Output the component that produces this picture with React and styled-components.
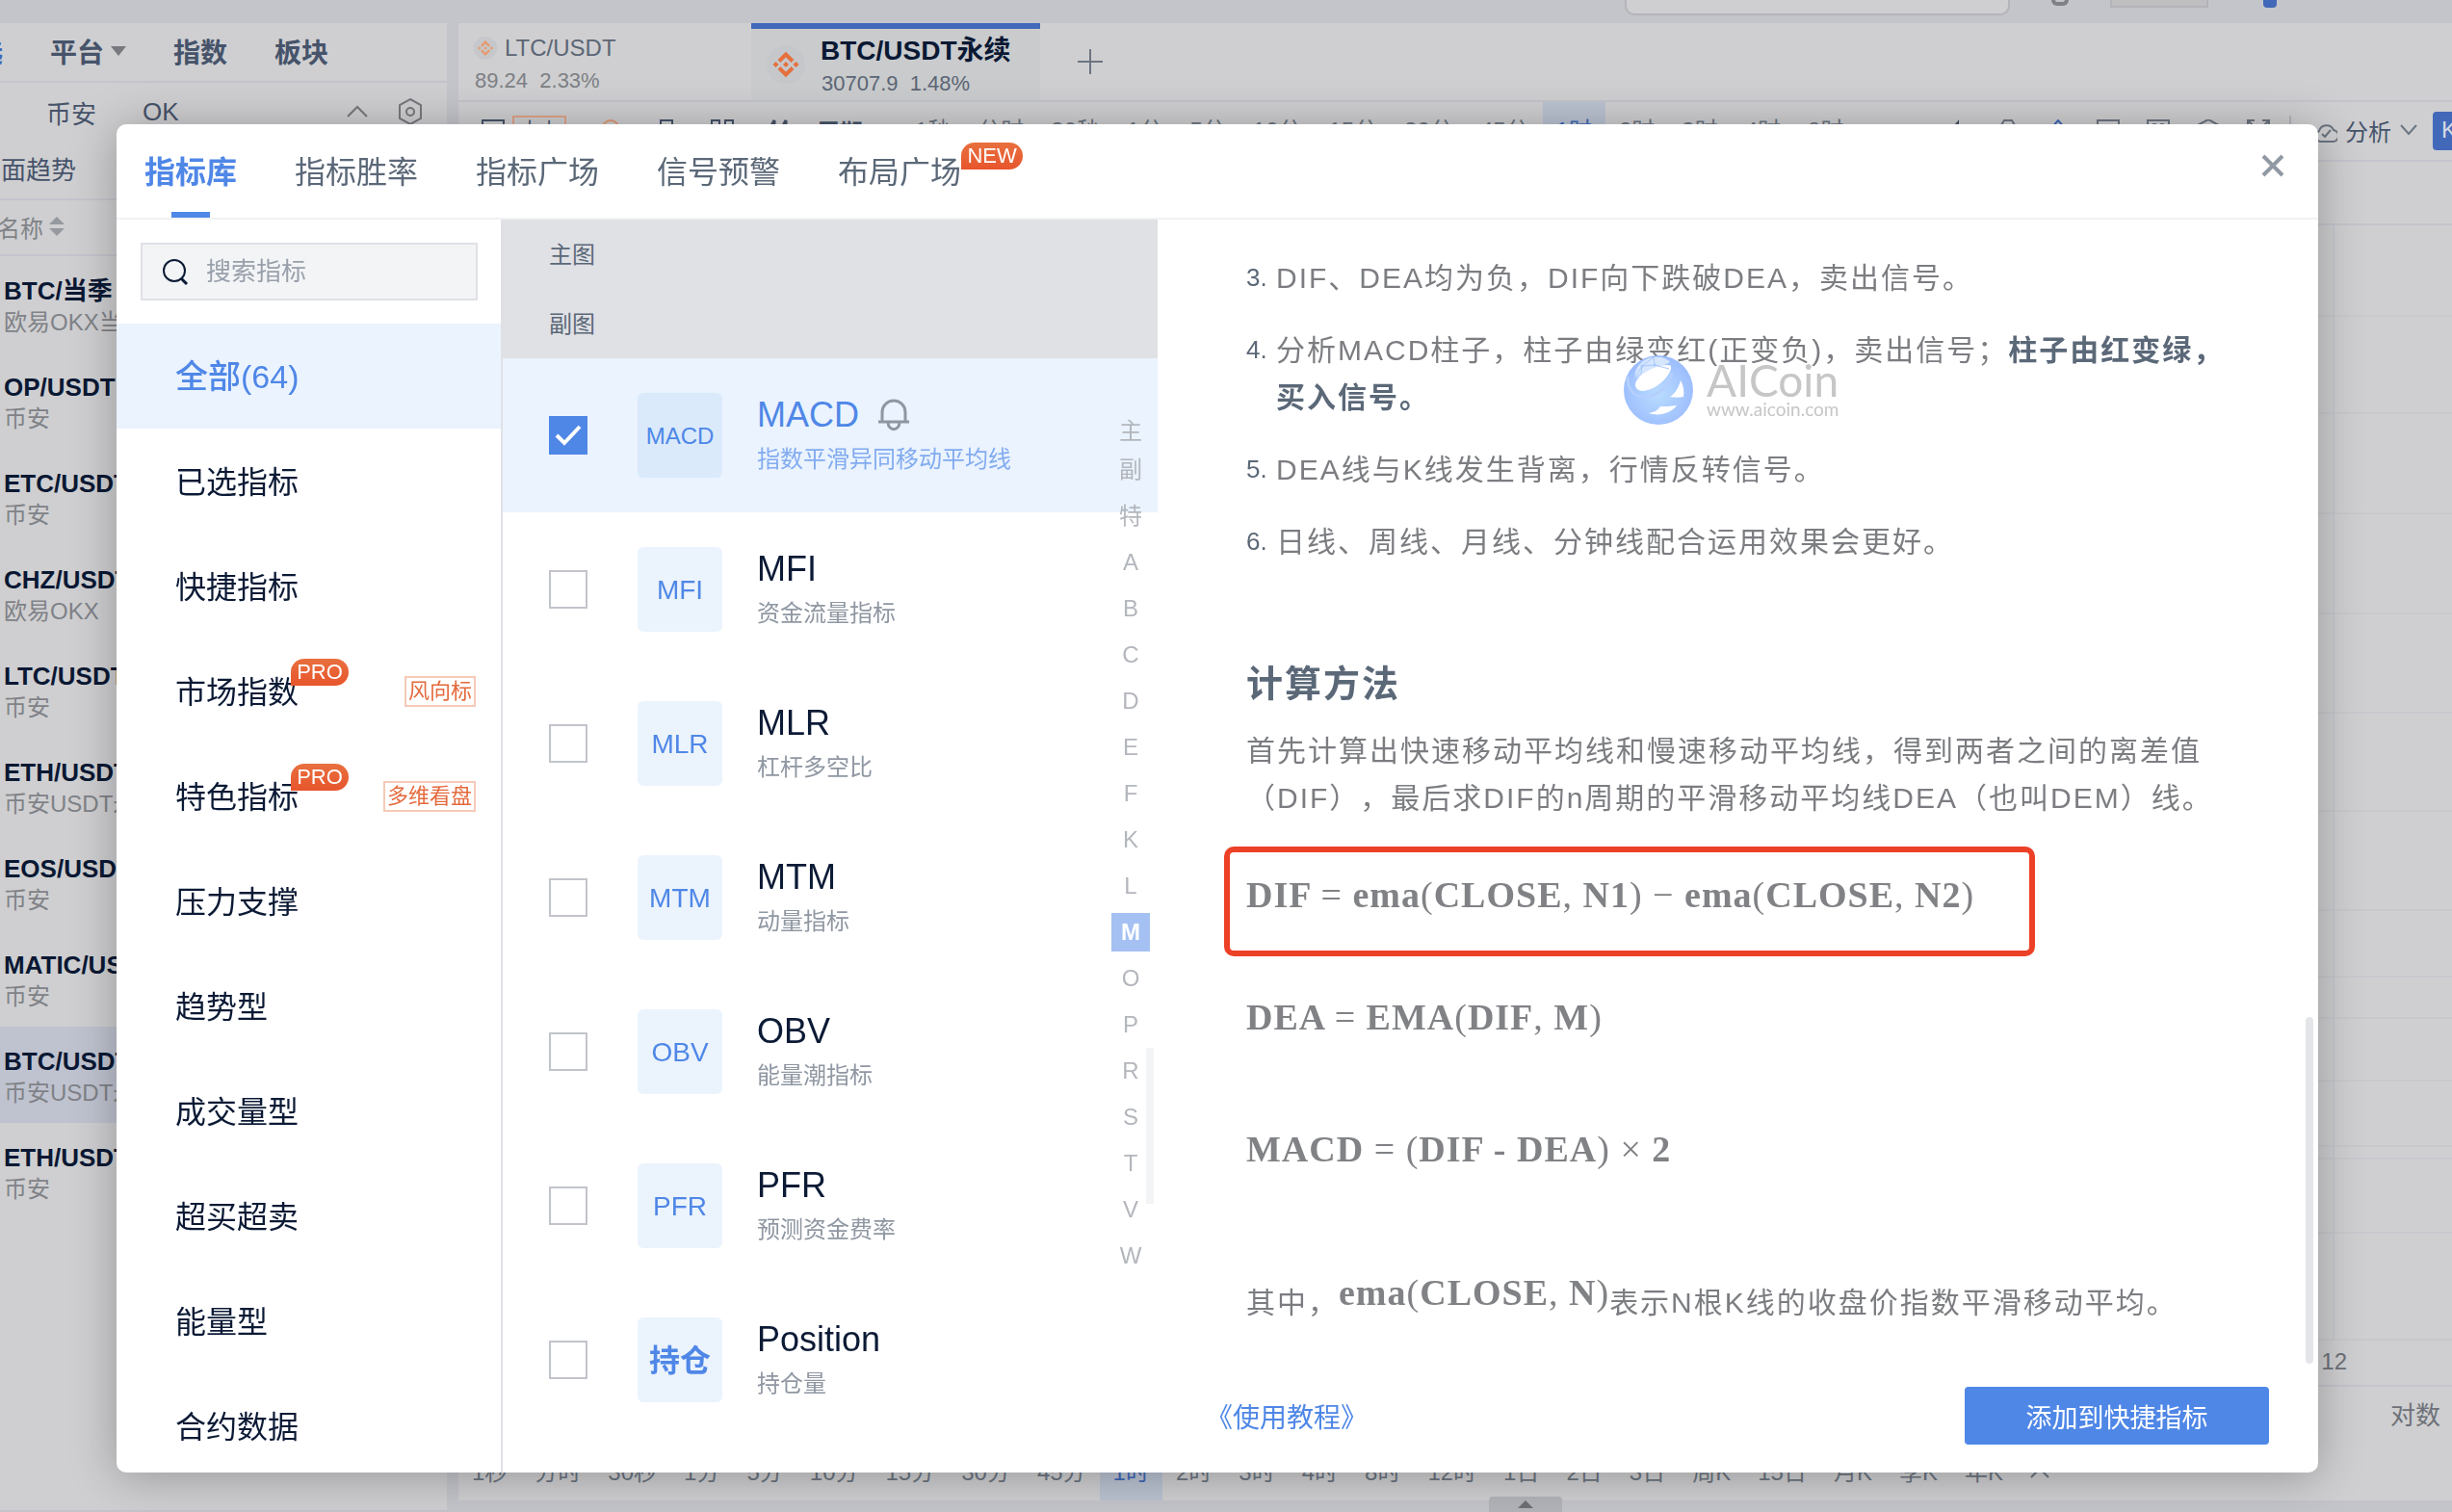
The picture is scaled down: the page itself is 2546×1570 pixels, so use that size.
import React, { useState } from "react";
import styled, { createGlobalStyle } from "styled-components";

const pairs = [
  { name: "BTC/当季", market: "欧易OKX当季" },
  { name: "OP/USDT", market: "币安" },
  { name: "ETC/USDT", market: "币安" },
  { name: "CHZ/USDT", market: "欧易OKX" },
  { name: "LTC/USDT", market: "币安" },
  { name: "ETH/USDT", market: "币安USDT永续" },
  { name: "EOS/USDT", market: "币安" },
  { name: "MATIC/USDT", market: "币安" },
  { name: "BTC/USDT", market: "币安USDT永续", active: true },
  { name: "ETH/USDT", market: "币安" },
];

const topPeriods = [
  "1秒", "分时", "30秒", "1分", "5分", "10分", "15分", "30分", "45分",
  "1时", "2时", "3时", "4时", "8时",
];

const bottomPeriods = [
  ...topPeriods,
  "12时", "1日", "2日", "3日", "周K", "15日", "月K", "季K", "年K",
];

const chartRows = [95, 102, 104, 104, 104, 102, 104, 68, 42, 65, 67, 12, 76, 112];

const modalTabs = ["指标库", "指标胜率", "指标广场", "信号预警", "布局广场"];

const categories = [
  { name: "全部(64)" },
  { name: "已选指标" },
  { name: "快捷指标" },
  { name: "市场指数", pro: true, tag: "风向标" },
  { name: "特色指标", pro: true, tag: "多维看盘" },
  { name: "压力支撑" },
  { name: "趋势型" },
  { name: "成交量型" },
  { name: "超买超卖" },
  { name: "能量型" },
  { name: "合约数据" },
];

const indicators = [
  { icon: "MACD", name: "MACD", desc: "指数平滑异同移动平均线" },
  { icon: "MFI", name: "MFI", desc: "资金流量指标" },
  { icon: "MLR", name: "MLR", desc: "杠杆多空比" },
  { icon: "MTM", name: "MTM", desc: "动量指标" },
  { icon: "OBV", name: "OBV", desc: "能量潮指标" },
  { icon: "PFR", name: "PFR", desc: "预测资金费率" },
  { icon: "持仓", name: "Position", desc: "持仓量" },
];

const letters = [..."主副特ABCDEFKLMOPRSTVW"];

function Coin({ size, color }) {
  return (
    <svg width={size} height={size} viewBox="0 0 40 40">
      <circle cx="20" cy="20" r="20" fill="#c6c7cb" />
      <g fill="none" stroke={color} strokeWidth="4">
        <path d="M13 16.500l7-7 7 7" />
        <path d="M13 23.500l7 7 7-7" />
      </g>
      <g fill={color}>
        <path d="M20 17l3 3-3 3-3-3z" />
        <path d="M9.500 17l3 3-3 3-3-3z" />
        <path d="M30.500 17l3 3-3 3-3-3z" />
      </g>
    </svg>
  );
}

function LineIcon({ d, color = "#6c7581", width = 24, height = 24, stroke = 2 }) {
  return (
    <svg width={width} height={height} viewBox={`0 0 ${width} ${height}`} fill="none" stroke={color} strokeWidth={stroke}>
      <path d={d} />
    </svg>
  );
}

function Globe() {
  return (
    <svg width="72" height="72" viewBox="0 0 72 72">
      <defs>
        <radialGradient id="globe" cx="0.5" cy="0.55" r="0.55">
          <stop offset="0" stopColor="#b9dcff" />
          <stop offset="1" stopColor="#9bbcfd" />
        </radialGradient>
      </defs>
      <circle cx="36" cy="36" r="36" fill="url(#globe)" />
      <path d="M12 24C10 14 19 3 31 2c7-1 14 1 17 5" fill="#d5e6fd" />
      <path d="M13 34c-4-6 4-15 18-21 8-3 15-4 18-2 1 6-6 15-15 21-8 5-17 7-21 2z" fill="#fff" />
      <path d="M11 24l8-13 12-9M19 11l13-1 15 4M31 2l1 8M11 24l7-5 1-8" stroke="#a8c8fc" fill="none" />
      <circle cx="19" cy="11" r="1.500" fill="#a8c8fc" />
      <circle cx="32" cy="10" r="1.500" fill="#a8c8fc" />
      <circle cx="11" cy="24" r="1.500" fill="#a8c8fc" />
      <path d="M4 22c0 14 7 22 18 21 13-1 25-11 28-25" fill="none" stroke="#b4cffd" strokeWidth="3" />
      <path d="M48 43c6-4 9-10 11-17 3 5 4 11 3 17-4 1-9 1-14 0z" fill="#fff" />
      <path d="M26 60c6-1 9-3 12-7 5 0 11 0 17-1-5 7-17 12-29 8z" fill="#fff" />
    </svg>
  );
}

// Letters and digits are bold, brackets and commas stay light
function Formula({ children }) {
  return (
    <FormulaText>
      {children.split(/([(),=−×])/).map((part, i) =>
        /^[(),=−×]$/.test(part) ? <i key={i}>{part}</i> : <b key={i}>{part}</b>
      )}
    </FormulaText>
  );
}

function Workspace() {
  return (
    <Page>
      <TopBar>
        <TopSearch />
        <TopRing />
        <TopBox />
        <TopMark />
      </TopBar>
      <Main>
        <Market>
          <MarketTabs>
            <a href="#favorite" className="on">自选</a>
            <a href="#platform">
              平台
              <svg width="16" height="10" viewBox="0 0 16 10">
                <path d="M0 0h16L8 10z" fill="#77797e" />
              </svg>
            </a>
            <a href="#index">指数</a>
            <a href="#sector">板块</a>
          </MarketTabs>
          <Exchanges>
            <a href="#binance">币安</a>
            <a href="#ok">OK</a>
            <span>
              <LineIcon width={24} height={14} color="#77797e" d="M2 12L12 2l10 10" />
              <svg width="26" height="28" viewBox="0 0 26 28" fill="none" stroke="#77797e" strokeWidth="2">
                <path d="M13 1l11 6v14l-11 6-11-6V7z" />
                <circle cx="13" cy="14" r="4" />
              </svg>
            </span>
          </Exchanges>
          <Trend>面趋势</Trend>
          <ListHead>
            名称
            <svg width="16" height="20" viewBox="0 0 16 20" fill="#96999f">
              <path d="M8 0l8 8H0zM0 12h16l-8 8z" />
            </svg>
          </ListHead>
          {pairs.map((pair, i) => (
            <Pair key={i} $active={pair.active}>
              <strong>{pair.name}</strong>
              <span>{pair.market}</span>
            </Pair>
          ))}
        </Market>
        <Board>
          <SymbolTabs>
            <SymbolTab>
              <div>
                <p>
                  <Coin size={24} color="#e79b6d" />
                  LTC/USDT
                </p>
                <small>89.24&nbsp; 2.33%</small>
              </div>
            </SymbolTab>
            <SymbolTab $active>
              <Coin size={40} color="#e5703c" />
              <div>
                <p>BTC/USDT永续</p>
                <small>30707.9&nbsp; 1.48%</small>
              </div>
            </SymbolTab>
            <AddTab aria-label="添加">
              <LineIcon width={26} height={26} d="M13 0v26M0 13h26" />
            </AddTab>
          </SymbolTabs>
          <Toolbar>
            <ToolIcons>
              <span>
                <LineIcon color="#46536a" d="M1 1h22v20H1z" />
                <ToolTag>大小</ToolTag>
              </span>
              <LineIcon color="#e09a74" d="M2 12C4 4 8 1 12 1s8 3 10 11" />
              <LineIcon color="#46536a" d="M6 6V1h12v5M0 6h24v16H0" />
              <LineIcon color="#46536a" d="M1 1h8v8H1zM15 1h8v8h-8z" />
              <LineIcon color="#46536a" stroke={3} d="M2 12L8 1v12M14 12l6-11v12" />
            </ToolIcons>
            <PeriodLabel>周期</PeriodLabel>
            <Periods items={topPeriods} />
            <RightTools>
              <LineIcon color="#46536a" d="M6 10l6-7v20" />
              <LineIcon d="M0 6h5l3-5h8l3 5h5v14H0z" />
              <LineIcon color="#3f69b8" d="M6 8l6-7 6 7" />
              <LineIcon d="M1 1h22v18H1z" />
              <LineIcon d="M1 1h22v18H1zM6 5h4M14 5h4" />
              <LineIcon d="M1 6l11-6 11 6v12H1z" />
              <LineIcon d="M1 8V1h7M16 1h7v7M2 2l6 6M22 2l-6 6" />
              <Divider />
              <LineIcon d="M6 23a6 6 0 0 1-1-11 8 8 0 0 1 15-1 6 6 0 0 1-2 12zM8 15l3 3 6-7" />
              <button>
                分析
                <LineIcon width={18} height={12} d="M1 1l8 9 8-9" />
              </button>
              <KButton>K</KButton>
            </RightTools>
          </Toolbar>
          <InfoBar />
          {chartRows.map((rows, i) => (
            <ChartRow key={i} $size={rows}>
              <div />
            </ChartRow>
          ))}
          <DateAxis>12</DateAxis>
          <ChartFooter>对数</ChartFooter>
          <BottomPeriods>
            <Periods items={bottomPeriods} />
            <LineIcon width={20} height={12} d="M1 11l9-9 9 9" />
          </BottomPeriods>
          <DrawerBar>
            <DrawerHandle aria-label="展开">
              <svg width="16" height="8" viewBox="0 0 16 8">
                <path d="M0 8h16L8 0z" fill="#6c6f75" />
              </svg>
            </DrawerHandle>
          </DrawerBar>
        </Board>
      </Main>
    </Page>
  );
}

function Periods({ items }) {
  return (
    <PeriodList>
      {items.map((item) => (
        <Period key={item} $active={item === "1时"}>
          {item}
        </Period>
      ))}
    </PeriodList>
  );
}

export default function App() {
  const [tab, setTab] = useState("指标库");
  const [category, setCategory] = useState("全部(64)");
  const [checked, setChecked] = useState(["MACD"]);

  const toggle = (name) => {
    setChecked((prev) =>
      prev.includes(name) ? prev.filter((v) => v !== name) : [...prev, name]
    );
  };

  return (
    <>
      <GlobalStyle />
      <Workspace />
      <Overlay>
        <Modal role="dialog" aria-label="指标库">
          <ModalHeader>
            {modalTabs.map((name) => (
              <ModalTab key={name} $active={tab === name} onClick={() => setTab(name)}>
                {name}
                {name === "布局广场" && <NewBadge>NEW</NewBadge>}
              </ModalTab>
            ))}
            <Close aria-label="关闭">
              <LineIcon color="#9199a4" stroke={4} d="M2 2l20 20M22 2L2 22" />
            </Close>
          </ModalHeader>
          <ModalBody>
            <Sidebar>
              <Search>
                <svg width="28" height="28" viewBox="0 0 28 28" fill="none" stroke="#0b1a35" strokeWidth="2">
                  <circle cx="13" cy="13" r="11" />
                  <path d="M20 21l6 6" strokeWidth="3" />
                </svg>
                <input placeholder="搜索指标" aria-label="搜索指标" />
              </Search>
              {categories.map((item) => (
                <Category
                  key={item.name}
                  $active={category === item.name}
                  onClick={() => setCategory(item.name)}
                >
                  <span>
                    {item.name}
                    {item.pro && <ProBadge>PRO</ProBadge>}
                  </span>
                  {item.tag && <Tag>{item.tag}</Tag>}
                </Category>
              ))}
            </Sidebar>
            <Middle>
              <Group>主图</Group>
              <Group>副图</Group>
              {indicators.map((item) => {
                const active = checked.includes(item.name);
                return (
                  <Indicator key={item.name} $active={active}>
                    <CheckWrap>
                      <input type="checkbox" checked={active} onChange={() => toggle(item.name)} />
                      {active && <LineIcon width={28} height={22} stroke={4} color="#fff" d="M2 11l8 8L26 2" />}
                    </CheckWrap>
                    <Tile $active={active} $small={item.icon.length > 3} $bold={item.icon === "持仓"}>
                      {item.icon}
                    </Tile>
                    <IndicatorText $active={active}>
                      <h3>
                        {item.name}
                        {active && (
                          <svg width="32" height="34" viewBox="0 0 32 34" fill="none" stroke="#8e96a1" strokeWidth="3">
                            <path d="M4 24V14a12 12 0 0 1 24 0v10M0 24h32" />
                            <path d="M10 25c1 9 11 9 12 0" />
                          </svg>
                        )}
                      </h3>
                      <p>{item.desc}</p>
                    </IndicatorText>
                  </Indicator>
                );
              })}
              <LetterIndex>
                {letters.map((letter) => (
                  <a key={letter} href={`#${letter}`} className={letter === "M" ? "on" : undefined}>
                    <span>{letter}</span>
                  </a>
                ))}
              </LetterIndex>
              <MiddleThumb />
            </Middle>
            <Detail>
              <Article>
                <ol start="3">
                  <li>
                    <em>3.</em>
                    <p>DIF、DEA均为负，DIF向下跌破DEA，卖出信号。</p>
                  </li>
                  <li>
                    <em>4.</em>
                    <p>
                      分析MACD柱子，柱子由绿变红(正变负)，卖出信号；
                      <strong>柱子由红变绿，买入信号。</strong>
                    </p>
                  </li>
                  <li>
                    <em>5.</em>
                    <p>DEA线与K线发生背离，行情反转信号。</p>
                  </li>
                  <li>
                    <em>6.</em>
                    <p>日线、周线、月线、分钟线配合运用效果会更好。</p>
                  </li>
                </ol>
                <h2>计算方法</h2>
                <p>
                  首先计算出快速移动平均线和慢速移动平均线，得到两者之间的离差值（DIF），最后求DIF的n周期的平滑移动平均线DEA（也叫DEM）线。
                </p>
                <Highlight>
                  <Formula>DIF = ema(CLOSE, N1) − ema(CLOSE, N2)</Formula>
                </Highlight>
                <FormulaRow>
                  <Formula>DEA = EMA(DIF, M)</Formula>
                </FormulaRow>
                <FormulaRow>
                  <Formula>MACD = (DIF - DEA) × 2</Formula>
                </FormulaRow>
                <Note>
                  其中，
                  <Formula>ema(CLOSE, N)</Formula>
                  表示N根K线的收盘价指数平滑移动平均。
                </Note>
              </Article>
              <Watermark>
                <Globe />
                <div>
                  <b>AICoin</b>
                  <span>www.aicoin.com</span>
                </div>
              </Watermark>
              <DetailThumb />
              <DetailFooter>
                <a href="#tutorial">《使用教程》</a>
                <button>添加到快捷指标</button>
              </DetailFooter>
            </Detail>
          </ModalBody>
        </Modal>
      </Overlay>
    </>
  );
}

const GlobalStyle = createGlobalStyle`
  * {
    box-sizing: border-box;
  }

  body {
    margin: 0;
    overflow: hidden;
    background-color: #c4c5cb;
    font-family: "Liberation Sans", "Noto Sans CJK SC", sans-serif;
    text-spacing-trim: space-all;
  }

  h2, h3, p, ol {
    margin: 0;
    padding: 0;
  }

  a {
    color: inherit;
    text-decoration: none;
  }

  button, input {
    margin: 0;
    padding: 0;
    border: 0;
    background: none;
    font-family: inherit;
    color: inherit;
  }

  svg {
    display: block;
    flex-shrink: 0;
  }
`;

const Page = styled.div`
  height: 100vh;
  display: flex;
  flex-direction: column;
  overflow: hidden;
  white-space: nowrap;
`;

const TopBar = styled.header`
  height: 24px;
  flex-shrink: 0;
  display: flex;
  align-items: flex-start;
  justify-content: flex-end;
  padding-right: 182px;
  overflow: hidden;
`;

const TopSearch = styled.div`
  width: 400px;
  height: 16px;
  background-color: #cfcfd1;
  border: 2px solid #b4b5ba;
  border-top: 0;
  border-radius: 0 0 10px 10px;
`;

const TopRing = styled.div`
  width: 18px;
  height: 6px;
  margin: 0 43px;
  border: 4px solid #808186;
  border-top: 0;
  border-radius: 0 0 9px 9px;
`;

const TopBox = styled.div`
  width: 102px;
  height: 8px;
  background-color: #bfbfc1;
  border: 2px solid #b3b4b8;
  border-top: 0;
`;

const TopMark = styled.div`
  width: 14px;
  height: 8px;
  margin-left: 57px;
  background-color: #4269b9;
  border-radius: 0 0 4px 4px;
`;

const Main = styled.main`
  flex: 1;
  min-height: 0;
  display: flex;
  gap: 12px;
`;

const Market = styled.aside`
  width: 464px;
  flex-shrink: 0;
  background-color: #cfcfd1;
  overflow: hidden;
  margin-bottom: 2px;
`;

const MarketTabs = styled.nav`
  height: 62px;
  display: flex;
  align-items: center;
  gap: 49px;
  margin-left: -53px;
  padding-bottom: 2px;
  border-bottom: 2px solid #c4c5cc;
  font-size: 28px;
  font-weight: 700;
  color: #46536a;

  a {
    display: flex;
    align-items: center;
    gap: 7px;
  }

  .on {
    color: #3f69b8;
  }
`;

const Exchanges = styled.div`
  height: 60px;
  display: flex;
  align-items: center;
  gap: 48px;
  padding: 0 25px 0 48px;
  font-size: 26px;
  color: #46536a;

  span {
    margin-left: auto;
    display: flex;
    align-items: center;
    gap: 30px;
  }
`;

const Trend = styled.div`
  height: 62px;
  padding: 1px 0 0 1px;
  border-bottom: 2px solid #c4c5cc;
  font-size: 26px;
  line-height: 60px;
  color: #46536a;
`;

const ListHead = styled.div`
  height: 58px;
  display: flex;
  align-items: center;
  gap: 6px;
  margin-left: -3px;
  padding-bottom: 2px;
  border-bottom: 2px solid #c4c5cc;
  font-size: 24px;
  color: #808287;
`;

const Pair = styled.div`
  height: 100px;
  padding: 20px 4px 0;
  background-color: ${(props) => (props.$active ? "#bfc3cf" : "transparent")};

  strong,
  span {
    display: block;
    font-size: 24px;
    line-height: 34px;
    color: #808287;
  }

  strong {
    font-size: 26px;
    line-height: 32px;
    color: #0a1833;
  }
`;

const Board = styled.section`
  flex: 1;
  min-width: 0;
  display: flex;
  flex-direction: column;
  background-color: #cfcfd1;
`;

const SymbolTabs = styled.div`
  height: 82px;
  flex-shrink: 0;
  display: flex;
  border-bottom: 2px solid #c4c5cc;
`;

const SymbolTab = styled.div`
  width: ${(props) => (props.$active ? 300 : 304)}px;
  display: flex;
  align-items: center;
  gap: 16px;
  padding: 0 16px;
  border-top: ${(props) => (props.$active ? "6px solid #4269b9" : "0")};
  background-color: ${(props) => (props.$active ? "#c9cbcd" : "transparent")};

  div {
    padding-top: 4px;
  }

  p {
    display: flex;
    align-items: center;
    gap: 8px;
    font-size: ${(props) => (props.$active ? 28 : 24)}px;
    font-weight: ${(props) => (props.$active ? 700 : 400)};
    line-height: 36px;
    color: ${(props) => (props.$active ? "#0a1833" : "#5c6675")};
  }

  small {
    display: block;
    padding-left: 1px;
    font-size: 22px;
    line-height: 32px;
    color: ${(props) => (props.$active ? "#5c6675" : "#7d8085")};
  }
`;

const AddTab = styled.button`
  margin-left: 39px;
`;

const Toolbar = styled.div`
  height: 62px;
  flex-shrink: 0;
  display: flex;
  align-items: center;
  padding-left: 24px;
  border-bottom: 2px solid #c4c5cc;
  color: #46536a;
  font-size: 24px;
`;

const ToolIcons = styled.div`
  display: flex;
  align-items: center;
  gap: 34px;

  span {
    display: flex;
    align-items: center;
    gap: 8px;
  }
`;

const ToolTag = styled.b`
  width: 56px;
  height: 32px;
  border: 2px solid #e0a488;
  font-size: 20px;
  font-weight: 400;
  line-height: 26px;
  text-align: center;
`;

const PeriodLabel = styled.b`
  margin: 0 40px 0 28px;
  padding-bottom: 2px;
`;

const PeriodList = styled.div`
  height: 60px;
  display: flex;
`;

const Period = styled.button`
  padding: 0 14px;
  font-size: 24px;
  line-height: 58px;
  color: ${(props) => (props.$active ? "#3f69b8" : "#6c7581")};
  background-color: ${(props) => (props.$active ? "#bbc3d2" : "transparent")};
`;

const RightTools = styled.div`
  margin-left: auto;
  display: flex;
  align-items: center;
  gap: 28px;

  button {
    display: flex;
    align-items: center;
    gap: 9px;
    margin-left: -20px;
    padding-bottom: 2px;
    font-size: 24px;
  }
`;

const Divider = styled.span`
  width: 2px;
  height: 32px;
  margin: 0 -4px 0 -8px;
  background-color: #b2b4b9;
`;

const KButton = styled.button`
  && {
    width: 20px;
    height: 40px;
    margin-left: -12px;
    padding-left: 9px;
    border-radius: 4px 0 0 4px;
    background-color: #4269b9;
    color: #d5d9e3;
    overflow: hidden;
  }
`;

const InfoBar = styled.div`
  height: 66px;
  flex-shrink: 0;
  border-bottom: 2px solid #c4c5cc;
`;

const ChartRow = styled.div`
  flex: ${(props) => props.$size} 1 0;
  border-bottom: 2px solid #c8c9cd;

  div {
    height: 100%;
    margin-right: 122px;
    border-right: 2px solid #c5c8cf;
  }
`;

const DateAxis = styled.div`
  height: 48px;
  flex-shrink: 0;
  padding-right: 109px;
  border-bottom: 2px solid #c4c5cc;
  font-size: 24px;
  line-height: 44px;
  text-align: right;
  color: #6d7178;
`;

const ChartFooter = styled.div`
  height: 60px;
  flex-shrink: 0;
  padding-right: 12px;
  font-size: 26px;
  line-height: 60px;
  text-align: right;
  color: #6d7178;
`;

const BottomPeriods = styled.div`
  height: 58px;
  flex-shrink: 0;
  display: flex;
  align-items: center;
  gap: 14px;
  overflow: hidden;
`;

const DrawerBar = styled.div`
  height: 12px;
  flex-shrink: 0;
  display: flex;
  align-items: flex-end;
  padding-left: 1070px;
  background-color: #c4c5cb;
`;

const DrawerHandle = styled.button`
  width: 76px;
  height: 16px;
  flex-shrink: 0;
  display: flex;
  align-items: center;
  justify-content: center;
  border-radius: 4px 4px 0 0;
  background-color: #b3b4b9;
`;

const Overlay = styled.div`
  position: fixed;
  inset: 0;
  display: flex;
  padding: 129px 139px 41px 121px;
`;

const Modal = styled.section`
  flex: 1;
  min-width: 0;
  display: flex;
  flex-direction: column;
  border-radius: 10px;
  background-color: #fff;
  box-shadow: 0 4px 48px rgba(0, 0, 0, 0.28);
  overflow: hidden;
`;

const ModalHeader = styled.header`
  height: 99px;
  flex-shrink: 0;
  display: flex;
  gap: 60px;
  padding: 0 35px 0 29px;
  border-bottom: 2px solid #f1f2f4;
`;

const ModalTab = styled.button`
  position: relative;
  padding-bottom: 4px;
  font-size: 32px;
  font-weight: ${(props) => (props.$active ? 700 : 400)};
  color: ${(props) => (props.$active ? "#4f87e7" : "#5b6878")};

  &::after {
    content: "";
    position: absolute;
    left: 50%;
    bottom: 0;
    width: 40px;
    height: 6px;
    margin-left: -20px;
    background-color: ${(props) => (props.$active ? "#4f87e7" : "transparent")};
  }
`;

const Badge = styled.span`
  position: absolute;
  height: 28px;
  border-radius: 14px 14px 14px 0;
  background: linear-gradient(#e8703f, #e8552c);
  color: #fff;
  font-size: 22px;
  font-weight: 400;
  line-height: 28px;
  text-align: center;
`;

const NewBadge = styled(Badge)`
  left: 100%;
  top: 19px;
  width: 64px;
`;

const ProBadge = styled(Badge)`
  left: 120px;
  top: -9px;
  width: 60px;
`;

const Close = styled.button`
  margin-left: auto;
  height: 86px;
`;

const ModalBody = styled.div`
  flex: 1;
  min-height: 0;
  display: flex;
`;

const Sidebar = styled.nav`
  width: 401px;
  flex-shrink: 0;
  padding-top: 24px;
  border-right: 2px solid #e0e1e6;
  overflow: hidden;
`;

const Search = styled.label`
  height: 60px;
  display: flex;
  align-items: center;
  gap: 18px;
  margin: 0 24px 24px 25px;
  padding-left: 20px;
  border: 2px solid #dfe1e6;
  background-color: #f3f4f6;

  input {
    flex: 1;
    min-width: 0;
    outline: 0;
    font-size: 26px;
  }

  input::placeholder {
    color: #98a0ab;
    opacity: 1;
  }
`;

const Category = styled.button`
  width: 100%;
  height: 109px;
  display: flex;
  align-items: center;
  justify-content: space-between;
  padding: 0 26px 4px 61px;
  background-color: ${(props) => (props.$active ? "#eaf3fe" : "transparent")};
  color: ${(props) => (props.$active ? "#4f87e7" : "#0b1a35")};
  font-size: ${(props) => (props.$active ? 34 : 32)}px;
  font-weight: ${(props) => (props.$active ? 500 : 400)};

  > span:first-child {
    position: relative;
  }
`;

const Tag = styled.span`
  margin-top: 4px;
  padding: 0 2px;
  border: 2px solid #f5cab8;
  color: #e46a3c;
  font-size: 22px;
  line-height: 28px;
`;

const Middle = styled.div`
  position: relative;
  width: 680px;
  flex-shrink: 0;
  overflow: hidden;
`;

const Group = styled.div`
  height: 72px;
  padding-left: 48px;
  background-color: #e0e1e5;
  color: #5b6878;
  font-size: 24px;
  line-height: 74px;
`;

const Indicator = styled.label`
  height: 160px;
  display: flex;
  align-items: center;
  padding-left: 48px;
  background-color: ${(props) => (props.$active ? "#eaf3fe" : "transparent")};
`;

const CheckWrap = styled.span`
  display: grid;
  place-items: center;

  > * {
    grid-area: 1 / 1;
  }

  input {
    appearance: none;
    width: 40px;
    height: 40px;
    border: 2px solid #c2c4cb;
  }

  input:checked {
    border-color: #4f87e7;
    background-color: #4f87e7;
  }

  svg {
    pointer-events: none;
  }
`;

const Tile = styled.span`
  width: 88px;
  height: 88px;
  margin: 0 36px 0 52px;
  border-radius: 6px;
  background-color: ${(props) => (props.$active ? "#daeafb" : "#ebf3fc")};
  color: #4f87e7;
  font-size: ${(props) => (props.$small ? 24 : props.$bold ? 32 : 28)}px;
  font-weight: ${(props) => (props.$bold ? 700 : 400)};
  line-height: 90px;
  text-align: center;
`;

const IndicatorText = styled.div`
  padding-top: 2px;

  h3 {
    display: flex;
    align-items: center;
    gap: 20px;
    font-size: 36px;
    font-weight: 400;
    line-height: 48px;
    color: ${(props) => (props.$active ? "#4f87e7" : "#0b1a35")};
  }

  p {
    font-size: 24px;
    line-height: 44px;
    color: ${(props) => (props.$active ? "#82abf0" : "#8f97a2")};
  }
`;

const LetterIndex = styled.nav`
  position: absolute;
  top: 204px;
  right: 8px;
  width: 40px;
  color: #b3b6bc;
  font-size: 24px;

  a {
    height: 48px;
    display: flex;
    align-items: center;
  }

  a:first-child {
    height: 32px;
  }

  span {
    width: 40px;
    line-height: 40px;
    text-align: center;
  }

  .on span {
    background-color: #a5c0f2;
    color: #fff;
    font-weight: 700;
  }
`;

const MiddleThumb = styled.div`
  position: absolute;
  top: 860px;
  right: 4px;
  width: 8px;
  height: 162px;
  background-color: #f3f4f6;
`;

const Detail = styled.div`
  position: relative;
  flex: 1;
  min-width: 0;
  display: flex;
  flex-direction: column;
`;

const Article = styled.article`
  flex: 1;
  min-height: 0;
  padding: 36px 94px 0 92px;
  overflow: hidden;
  font-size: 30px;
  line-height: 49px;
  letter-spacing: 2px;
  color: #7b7d81;

  li {
    display: flex;
    margin-bottom: 26px;
  }

  em {
    width: 31px;
    flex-shrink: 0;
    font-size: 26px;
    font-style: normal;
    letter-spacing: 0;
    color: #5b6878;
  }

  strong,
  h2 {
    color: #5b6878;
  }

  h2 {
    margin: 97px 0 19px;
    font-size: 38px;
    line-height: 52px;
  }
`;

const FormulaText = styled.span`
  font-family: "Liberation Serif", serif;
  font-size: 38px;
  letter-spacing: 1px;
  color: #808285;

  i {
    font-style: normal;
  }
`;

const Highlight = styled.div`
  width: 842px;
  height: 114px;
  margin: 26px 0 0 -23px;
  padding: 20px 17px;
  border: 6px solid #ec4127;
  border-radius: 10px;
`;

const FormulaRow = styled.div`
  margin-top: 39px;

  & + & {
    margin-top: 86px;
  }
`;

const Note = styled.div`
  display: flex;
  align-items: flex-end;
  margin-top: 98px;

  ${FormulaText} {
    padding-bottom: 10px;
  }
`;

const Watermark = styled.div`
  position: absolute;
  top: 141px;
  left: 484px;
  display: flex;
  align-items: center;
  gap: 14px;
  font-family: Lato, sans-serif;
  color: #c6c6c7;

  b,
  span {
    display: block;
    font-size: 46px;
    font-weight: 400;
    line-height: 40px;
  }

  span {
    font-size: 19px;
    line-height: 20px;
  }
`;

const DetailThumb = styled.div`
  position: absolute;
  top: 828px;
  right: 5px;
  width: 8px;
  height: 360px;
  border-radius: 4px;
  background-color: #e4e5e9;
`;

const DetailFooter = styled.footer`
  height: 115px;
  flex-shrink: 0;
  display: flex;
  align-items: center;
  justify-content: space-between;
  padding: 0 51px 3px 50px;
  color: #4f87e7;
  font-size: 28px;

  button {
    width: 316px;
    height: 60px;
    border-radius: 4px;
    background-color: #4f87e7;
    color: #fff;
    font-size: 27px;
  }
`;
